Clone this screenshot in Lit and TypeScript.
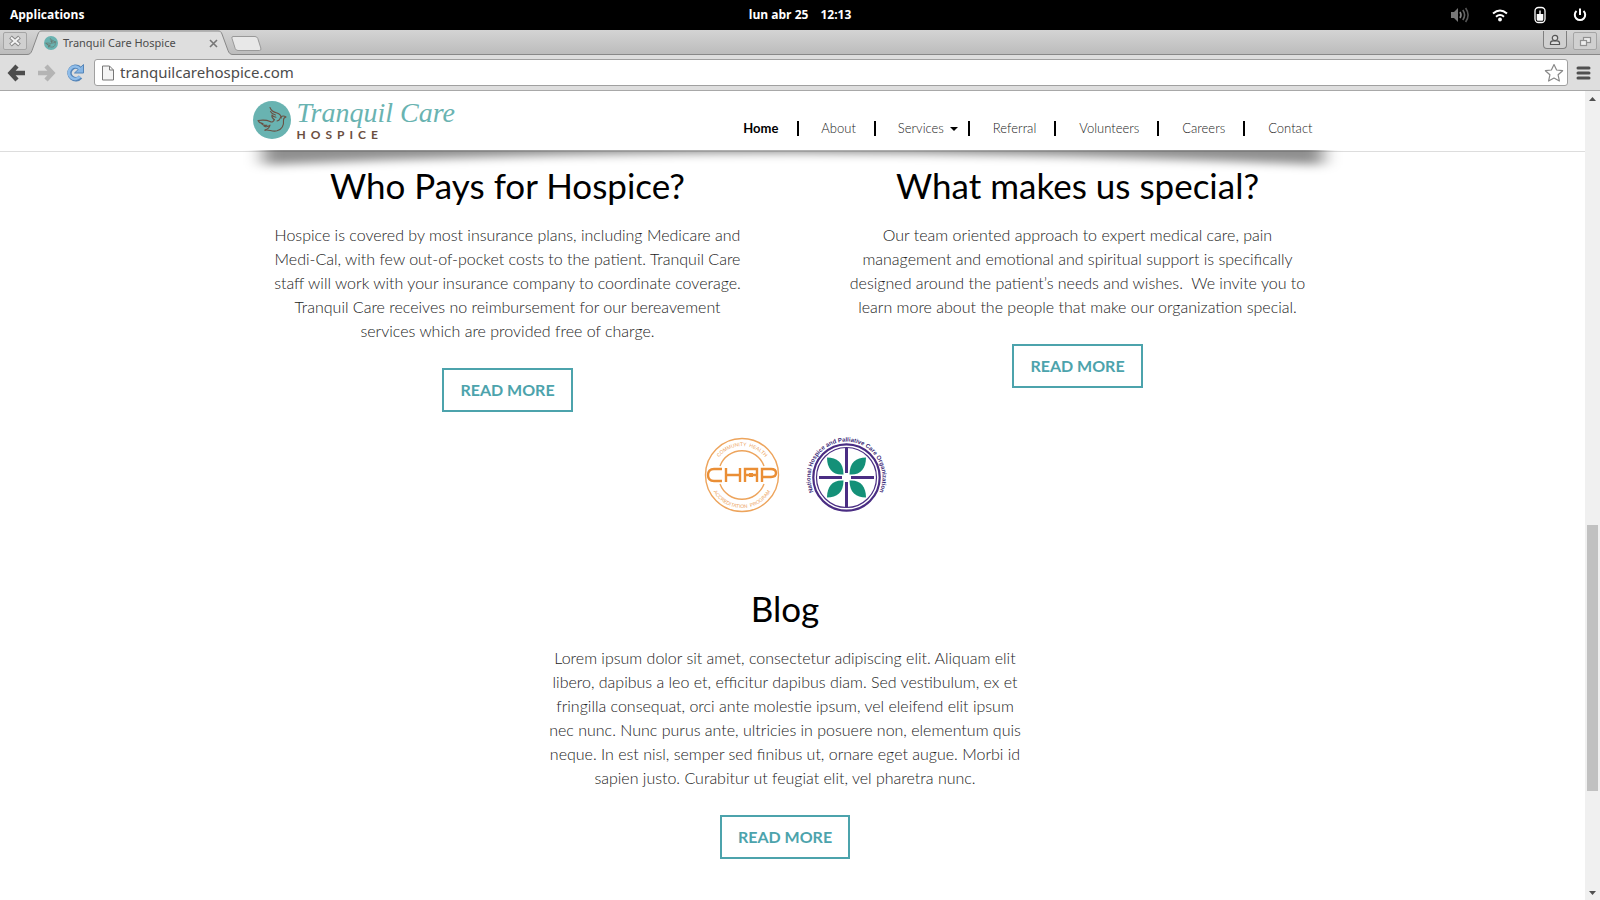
import { LitElement, html, css, svg } from "lit";
import { customElement, property } from "lit/decorators.js";

const dove = svg`
  <circle cx="19" cy="19" r="19" fill="#69b3b1"></circle>
  <g fill="none" stroke="#6a5144" stroke-width="1.100" stroke-linecap="round" stroke-linejoin="round">
    <path d="M17 6.500c1 3 3 4.500 7 5.500 2.500.8 4 2 4.300 5M17.500 10.500c1 2 2.500 3 5 3.500M19 14c1 1.500 2 2 4 2.200M19 14c-.5 2 .5 3.500 2 4.500"></path>
    <path d="M5 19.500c5-.7 9-.5 12 1 2 1.300 3.500.2 4.500-2M5 19.500c1 2 2.500 3 5 3M8.500 22.700c1.500 1.600 3.500 2 5.500 1.500M11 25c2 1.200 4 1 6-.8-.5 2.500-2.500 4-5 4.800"></path>
    <path d="M12 29.300c3.500-1.300 7 1.800 12 .5 5-1.500 7-6 6.500-10.800 0-1.500.8-2.500 2.500-3-3-2-5.500-.5-6 1.500-.5 1.500-1.500 2.300-3 2.500"></path>
  </g>`;

@customElement("system-bar")
class SystemBar extends LitElement {
  static styles = css`
    :host {
      display: grid;
      grid-template-columns: 1fr auto 1fr;
      align-items: center;
      height: 30px;
      box-sizing: border-box;
      padding: 0 10px;
      background: #000;
      color: #fff;
      font: bold 12px/16px "Open Sans", sans-serif;
    }
    .menu {
      justify-self: start;
      padding: 0;
      border: 0;
      background: none;
      color: inherit;
      font: inherit;
    }
    .clock {
      display: flex;
      gap: 12px;
    }
    .tray {
      display: flex;
      justify-content: flex-end;
      align-items: center;
      gap: 20px;
    }
    .tray svg {
      display: block;
      width: 20px;
      height: 18px;
    }
  `;
  render() {
    return html`
      <button class="menu">Applications</button>
      <div class="clock"><span>lun abr 25</span><span>12:13</span></div>
      <div class="tray">
        <svg viewBox="0 0 20 18" role="img" aria-label="Volume">
          <path d="M1 6h3l4-4v14l-4-4H1z" fill="#777"></path>
          <g fill="none" stroke="#666" stroke-width="1.600">
            <path d="M10 6q2 3 0 6" stroke="#888"></path>
            <path d="M12.800 4q3.600 5 0 10"></path>
            <path d="M15.600 2q5 7 0 14" stroke="#555"></path>
          </g>
        </svg>
        <svg viewBox="0 0 20 18" role="img" aria-label="Wi-Fi">
          <g fill="none" stroke="#fff" stroke-width="2">
            <path d="M3 7.500q7-6 14 0"></path>
            <path d="M6 10.800q4-3.500 8 0"></path>
          </g>
          <circle cx="10" cy="13.500" r="1.900" fill="#fff"></circle>
        </svg>
        <svg viewBox="0 0 20 18" role="img" aria-label="Mouse battery">
          <rect x="5" y="1.500" width="10" height="15" rx="3.500" fill="none" stroke="#fff" stroke-width="1.300"></rect>
          <path d="M6.700 8h6.600v5.500q0 1.300-1.300 1.300H8q-1.300 0-1.300-1.300zM9.300 4.500h1.400V8H9.300z" fill="#fff"></path>
        </svg>
        <svg viewBox="0 0 20 18" role="img" aria-label="Power">
          <path d="M6.500 5a5.200 5.200 0 1 0 7 0M10 2.500V9" fill="none" stroke="#fff" stroke-width="2"></path>
        </svg>
      </div>
    `;
  }
}

@customElement("browser-chrome")
class BrowserChrome extends LitElement {
  static styles = css`
    :host {
      display: block;
      color: #4c4c4c;
      font-family: "Noto Sans", sans-serif;
    }
    button {
      display: block;
      flex: none;
      padding: 0;
      border: 0;
      background: none;
    }
    svg {
      display: block;
    }
    .strip {
      display: flex;
      height: 25px;
      box-sizing: border-box;
      padding: 0 3px;
      background: linear-gradient(#d4d4d4, #bcbcbc);
      border-bottom: 1px solid #888;
    }
    .frame {
      display: grid;
      place-items: center;
      box-sizing: border-box;
      width: 24px;
      height: 18px;
      margin-top: 2px;
      border: 1px solid #a5a5a5;
      border-radius: 2px;
      background: #d0d0d0;
    }
    .tab {
      display: flex;
      align-items: center;
      position: relative;
      width: 206px;
      height: 25px;
      box-sizing: border-box;
      padding: 1px 15px 0 17px;
      gap: 5px;
      font-size: 11px;
      line-height: 16px;
    }
    .shape {
      position: absolute;
      inset: 0;
    }
    .tab > :not(.shape) {
      position: relative;
    }
    .title {
      flex: 1;
      white-space: nowrap;
    }
    .new {
      margin: 3px auto 0 -3px;
    }
    .user {
      border-top: 0;
      border-color: #808080;
      border-radius: 0 0 4px 4px;
      margin: 1px 6px 0 0;
    }
    .bar {
      display: flex;
      align-items: center;
      height: 36px;
      box-sizing: border-box;
      padding: 0 9px 0 6px;
      background: #dedede;
      border-bottom: 1px solid #a8a8a8;
    }
    .tools {
      display: flex;
      gap: 10px;
      margin-right: 8px;
    }
    .omnibox {
      display: flex;
      flex: 1;
      align-items: center;
      gap: 6px;
      height: 27px;
      box-sizing: border-box;
      padding: 0 3px 0 7px;
      margin-right: 8px;
      border: 1px solid #a0a0a0;
      border-radius: 3px;
      background: #fff;
    }
    .url {
      flex: 1;
      min-width: 0;
      padding: 0 0 2px;
      border: 0;
      outline: 0;
      background: none;
      color: #4c4c4c;
      font: 15px/22px "Noto Sans", sans-serif;
    }
  `;
  render() {
    return html`
      <div class="strip">
        <button class="frame" aria-label="Close window">
          <svg width="12" height="12" viewBox="0 0 12 12">
            <path d="M1.500 2l9 8M10.500 2l-9 8" stroke="#888" stroke-width="4"></path>
            <path d="M2 2.500l8 7M10 2.500l-8 7" stroke="#f4f4f4" stroke-width="2"></path>
          </svg>
        </button>
        <div class="tab">
          <svg class="shape" width="206" height="25" viewBox="0 0 206 25">
            <path d="M0 25v-.5c3 0 4-1.500 5-4L11 4c1-2.500 2-3 4-3h176c2 0 3 .5 4 3l6 16.500c1 2.500 2 4 5 4v.5z" fill="#dedede"></path>
            <path d="M0 24.500c3 0 4-1.500 5-4L11 4c1-2.500 2-3 4-3h176c2 0 3 .5 4 3l6 16.500c1 2.500 2 4 5 4" fill="none" stroke="#888"></path>
          </svg>
          <svg width="14" height="14" viewBox="0 0 38 38">${dove}</svg>
          <span class="title">Tranquil Care Hospice</span>
          <button aria-label="Close tab">
            <svg width="9" height="9" viewBox="0 0 9 9">
              <path d="M1 1l7 7M8 1l-7 7" stroke="#777" stroke-width="1.600"></path>
            </svg>
          </button>
        </div>
        <button class="new" aria-label="New tab">
          <svg width="32" height="17" viewBox="0 0 32 17">
            <path d="M3 1.500h22q2 0 2.800 2l3 9.500q.8 2.500-1.500 2.500H8q-2 0-2.800-2L2 3.500q-.6-2 1-2z" fill="#e8e8e8" stroke="#999"></path>
          </svg>
        </button>
        <button class="frame user" aria-label="Profile">
          <svg width="12" height="12" viewBox="0 0 12 12" fill="#ddd" stroke="#555" stroke-width="1.200">
            <path d="M1.500 10.500V9q0-2 2.500-2.200h4Q10.500 7 10.500 9v1.500z"></path>
            <circle cx="6" cy="4" r="2.700"></circle>
          </svg>
        </button>
        <button class="frame" aria-label="Restore window">
          <svg width="13" height="11" viewBox="0 0 13 11" fill="#eee" stroke="#909090" stroke-width="1.200">
            <rect x="4.500" y="1.500" width="7" height="5"></rect>
            <rect x="1.500" y="4.500" width="6" height="5"></rect>
          </svg>
        </button>
      </div>
      <div class="bar">
        <div class="tools">
          <button aria-label="Back">
            <svg width="20" height="20" viewBox="0 0 20 20">
              <path d="M11 3L4.500 10l6.500 7M5 10h14" fill="none" stroke="#4d4d4d" stroke-width="4.400"></path>
            </svg>
          </button>
          <button aria-label="Forward">
            <svg width="20" height="20" viewBox="0 0 20 20">
              <path d="M10 3l6.500 7-6.500 7M16 10H2" fill="none" stroke="#b4b4b4" stroke-width="4.400"></path>
            </svg>
          </button>
          <button aria-label="Reload">
            <svg width="20" height="20" viewBox="0 0 20 20">
              <path d="M14.500 14A6.200 6.200 0 1 1 13.500 5" fill="none" stroke="#5585b8" stroke-width="4.600"></path>
              <path d="M17.500 1.500v8.500h-9z" fill="#86b5e4" stroke="#5585b8"></path>
              <path d="M14 13.500A6.200 6.200 0 1 1 14 6" fill="none" stroke="#8fbdea" stroke-width="2.600"></path>
            </svg>
          </button>
        </div>
        <div class="omnibox">
          <svg width="12" height="16" viewBox="0 0 12 16">
            <path d="M.5 1h7l4 4v10H.5zM7.500 1v4h4" fill="#f4f4f4" stroke="#777"></path>
          </svg>
          <input class="url" aria-label="Address" value="tranquilcarehospice.com" />
          <button aria-label="Bookmark">
            <svg width="20" height="20" viewBox="0 0 20 20">
              <path d="M10 1.500l2.600 5.500 6 .7-4.500 4.100 1.300 6.200L10 15l-5.400 3 1.300-6.200L1.400 7.700l6-.7z" fill="#fff" stroke="#888" stroke-width="1.200" stroke-linejoin="round"></path>
            </svg>
          </button>
        </div>
        <button aria-label="Menu">
          <svg width="15" height="14" viewBox="0 0 15 14">
            <path d="M2 2h11M2 7h11M2 12h11" stroke="#505050" stroke-width="3" stroke-linecap="round"></path>
          </svg>
        </button>
      </div>
    `;
  }
}

@customElement("site-header")
class SiteHeader extends LitElement {
  static styles = css`
    :host {
      display: block;
      position: relative;
      background: #fff;
      border-bottom: 1px solid #ddd;
    }
    .inner {
      display: flex;
      justify-content: space-between;
      align-items: flex-start;
      max-width: 1080px;
      height: 60px;
      margin: 0 auto;
    }
    .logo {
      display: flex;
      gap: 6px;
      margin-top: 10px;
      text-decoration: none;
    }
    .name {
      display: block;
      color: #69b3b1;
      font: italic 28px/24px "Liberation Serif", serif;
    }
    .sub {
      display: block;
      color: #6b4f3f;
      font: bold 12px/20px Lato, sans-serif;
      letter-spacing: 5px;
    }
    nav {
      display: flex;
      align-items: center;
      margin: 30px 20px 0 0;
    }
    .link {
      display: flex;
      align-items: center;
      gap: 6px;
      padding: 0 18px 0 22px;
      color: #222;
      font: 300 13px/15px Lato, sans-serif;
      text-decoration: none;
      border-right: 2px solid #000;
    }
    .link:last-child {
      padding-right: 0;
      border: 0;
    }
    .current {
      padding-right: 19px;
      color: #000;
      font-weight: 700;
    }
    .parent {
      padding-right: 10px;
    }
    .parent ~ .link {
      padding-left: 23px;
    }
    .caret {
      border: 4px solid transparent;
      border-top-color: #000;
      border-bottom: 0;
    }
    .shadow {
      position: absolute;
      top: 59px;
      left: 50%;
      width: 1100px;
      height: 32px;
      transform: translateX(-50%);
      pointer-events: none;
    }
  `;
  render() {
    const links = ["Home", "About", "Services", "Referral", "Volunteers", "Careers", "Contact"];
    return html`
      <div class="inner">
        <a class="logo" href="#">
          <svg width="38" height="38" viewBox="0 0 38 38">${dove}</svg>
          <span><span class="name">Tranquil Care</span><span class="sub">HOSPICE</span></span>
        </a>
        <nav>
          ${links.map(
            (l) => html`<a class="link ${l === "Home" ? "current" : ""} ${l === "Services" ? "parent" : ""}" href="#"
              >${l}${l === "Services" ? html`<span class="caret"></span>` : ""}</a
            >`
          )}
        </nav>
      </div>
      <svg class="shadow" viewBox="0 0 1100 32" preserveAspectRatio="none">
        <defs>
          <filter id="soft" x="-5%" y="-100%" width="110%" height="300%">
            <feGaussianBlur stdDeviation="9 5"></feGaussianBlur>
          </filter>
        </defs>
        <path d="M20 -12H1080V15Q550 -9 20 15z" fill="#000" fill-opacity=".44" filter="url(#soft)"></path>
      </svg>
    `;
  }
}

@customElement("info-block")
class InfoBlock extends LitElement {
  @property() heading = "";
  @property() text = "";
  static styles = css`
    :host {
      display: flex;
      flex-direction: column;
      align-items: center;
      text-align: center;
      font-family: Lato, sans-serif;
    }
    h2 {
      margin: 0 0 18px;
      color: #000;
      font-size: 35px;
      font-weight: 400;
      line-height: 39px;
    }
    p {
      max-width: 478px;
      margin: 0 0 25px;
      color: #222;
      font-size: 16px;
      font-weight: 300;
      line-height: 24px;
    }
    .more {
      padding: 8px 16px;
      border: 2px solid #4ca3ac;
      color: #4ca3ac;
      font-size: 16px;
      font-weight: 700;
      line-height: 24px;
      text-decoration: none;
    }
  `;
  render() {
    return html`
      <h2>${this.heading}</h2>
      <p>${this.text}</p>
      <a class="more" href="#">READ MORE</a>
    `;
  }
}

@customElement("app-root")
class AppRoot extends LitElement {
  static styles = css`
    :host {
      display: flex;
      flex-direction: column;
      height: 100vh;
      background: #fff;
    }
    .view {
      display: flex;
      flex: 1;
      min-height: 0;
    }
    .page {
      flex: 1;
      min-width: 0;
      overflow: hidden;
    }
    .columns {
      display: grid;
      grid-template-columns: 1fr 1fr;
      align-items: start;
      max-width: 1140px;
      margin: 14px auto 23px;
    }
    .badges {
      display: flex;
      justify-content: center;
      gap: 20px;
      margin-bottom: 74px;
    }
    .badges svg {
      display: block;
      overflow: visible;
    }
    .ring {
      font: 5px "Liberation Sans", sans-serif;
      fill: #eda45c;
    }
    .org {
      font: bold 6px "Liberation Sans", sans-serif;
      fill: #3c2a78;
    }
    .blog {
      margin-right: 15px;
    }
    .scroll {
      display: grid;
      grid-template-rows: 15px 419fr 266fr 94fr 15px;
      width: 15px;
      background: #f0f0f0;
    }
    .thumb {
      grid-row: 3;
      margin: 0 2px;
      background: #c1c1c1;
    }
    .arrow {
      display: grid;
      place-items: center;
      padding: 0;
      border: 0;
      background: none;
    }
    .down {
      grid-row: 5;
    }
  `;
  render() {
    return html`
      <system-bar></system-bar>
      <browser-chrome></browser-chrome>
      <div class="view">
        <main class="page">
          <site-header></site-header>
          <div class="columns">
            <info-block
              heading="Who Pays for Hospice?"
              text="Hospice is covered by most insurance plans, including Medicare and Medi-Cal, with few out-of-pocket costs to the patient. Tranquil Care staff will work with your insurance company to coordinate coverage. Tranquil Care receives no reimbursement for our bereavement services which are provided free of charge."
            ></info-block>
            <info-block
              heading="What makes us special?"
              text="Our team oriented approach to expert medical care, pain management and emotional and spiritual support is specifically designed around the patient’s needs and wishes.&nbsp; We invite you to learn more about the people that make our organization special."
            ></info-block>
          </div>
          <div class="badges">
            <svg width="80" height="80" viewBox="0 0 80 80" role="img" aria-label="CHAP accreditation">
              <defs>
                <path id="up" d="M11 40a29 29 0 0 1 58 0"></path>
                <path id="low" d="M7 40a33 33 0 0 0 66 0"></path>
              </defs>
              <g fill="none" stroke="#eda45c">
                <circle cx="40" cy="40" r="36.500" stroke-width="1.400"></circle>
                <path d="M18 31a23.500 23.500 0 0 1 44 0M18 49a23.500 23.500 0 0 0 44 0" stroke-width="1.400"></path>
              </g>
              <text class="ring" text-anchor="middle"><textPath href="#up" startOffset="50%">COMMUNITY&#160; HEALTH</textPath></text>
              <text class="ring" text-anchor="middle"><textPath href="#low" startOffset="50%">ACCREDITATION&#160; PROGRAM</textPath></text>
              <g fill="none" stroke="#ea8e35" stroke-width="2.400">
                <path d="M20 34H12q-6 0-6 6t6 6h8M24 33v14M38 33v14M24 40h14M43 47V34h12V47M43 40h4M51 40h4M60 47V34h9q5 0 5 4t-5 4h-9"></path>
              </g>
              <rect x="47" y="38" width="4" height="4" fill="#ea8e35"></rect>
            </svg>
            <svg width="82" height="80" viewBox="0 0 82 80" role="img" aria-label="National Hospice and Palliative Care Organization">
              <defs><path id="arc" d="M12 58A36 36 0 1 1 77 58"></path></defs>
              <g fill="none" stroke="#4a2d83">
                <circle cx="44.500" cy="42.500" r="33.200" stroke-width="2.200"></circle>
                <circle cx="44.500" cy="42.500" r="30" stroke-width="1.200"></circle>
                <path d="M44.500 13v25M44.500 47v25M17 42.500h23M49 42.500h23" stroke-width="3"></path>
              </g>
              <g fill="#149078">
                <path d="M41.500 39.500C31 40.500 25 34 25 22.500c10 0 16.500 5 16.500 17z"></path>
                <path d="M47.500 39.500C58 40.500 64 34 64 22.500c-10 0-16.500 5-16.500 17z"></path>
                <path d="M41.500 45.500C31 44.500 25 51 25 62.500c10 0 16.500-5 16.500-17z"></path>
                <path d="M47.500 45.500C58 44.500 64 51 64 62.500c-10 0-16.500-5-16.500-17z"></path>
              </g>
              <text class="org" text-anchor="middle"><textPath href="#arc" startOffset="50%">National Hospice and Palliative Care Organization</textPath></text>
            </svg>
          </div>
          <info-block
            class="blog"
            heading="Blog"
            text="Lorem ipsum dolor sit amet, consectetur adipiscing elit. Aliquam elit libero, dapibus a leo et, efficitur dapibus diam. Sed vestibulum, ex et fringilla consequat, orci ante molestie ipsum, vel eleifend elit ipsum nec nunc. Nunc purus ante, ultricies in posuere non, elementum quis neque. In est nisl, semper sed finibus ut, ornare eget augue. Morbi id sapien justo. Curabitur ut feugiat elit, vel pharetra nunc."
          ></info-block>
        </main>
        <div class="scroll">
          <button class="arrow" aria-label="Scroll up">
            <svg width="7" height="4" viewBox="0 0 7 4"><path d="M0 4l3.500-4L7 4z" fill="#505050"></path></svg>
          </button>
          <div class="thumb"></div>
          <button class="arrow down" aria-label="Scroll down">
            <svg width="7" height="4" viewBox="0 0 7 4"><path d="M0 0l3.500 4L7 0z" fill="#505050"></path></svg>
          </button>
        </div>
      </div>
    `;
  }
}
